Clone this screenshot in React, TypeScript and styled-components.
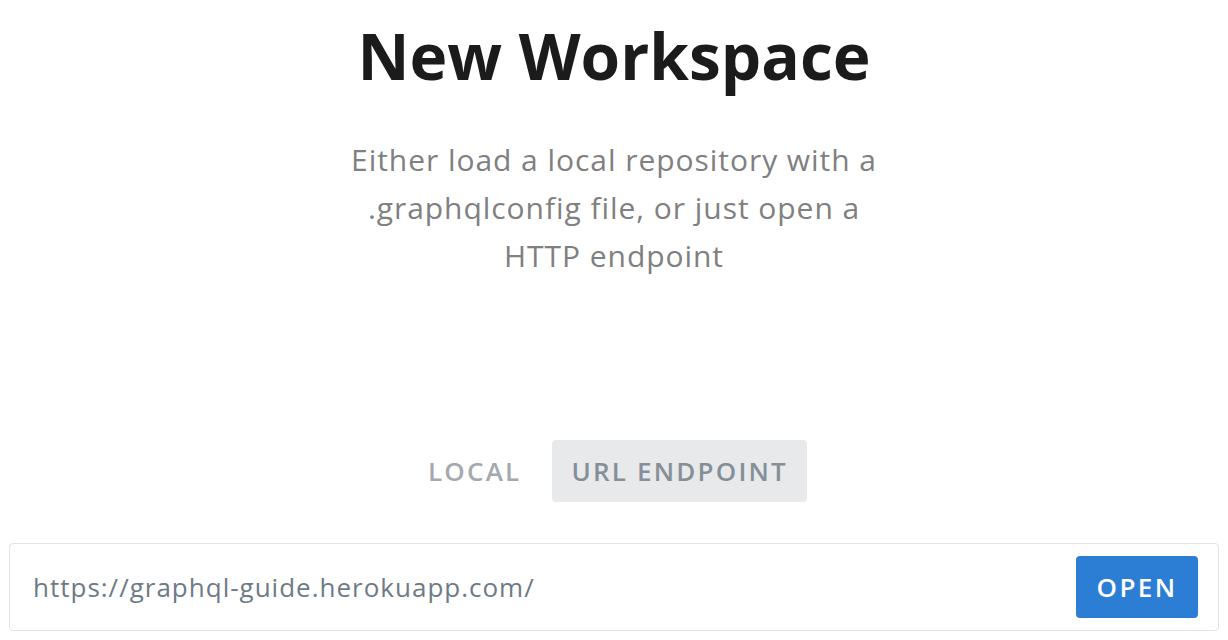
import React from "react";
import { styled, createGlobalStyle } from "styled-components";

const GlobalStyle = createGlobalStyle`
  html, body {
    margin: 0;
    padding: 0;
    background: #ffffff;
    font-family: "Open Sans", "Noto Sans", sans-serif;
  }
`;

type TabKey = "local" | "url";

const App = () => {
  const [tab, setTab] = React.useState<TabKey>("url");
  const [endpoint, setEndpoint] = React.useState("https://graphql-guide.herokuapp.com/");

  return (
    <>
      <GlobalStyle />
      <Page>
        <Title>New Workspace</Title>
        <Subtitle>
          Either load a local repository with a .graphqlconfig file, or just open a HTTP endpoint
        </Subtitle>
        <Tabs>
          <TabButton $active={tab === "local"} onClick={() => setTab("local")}>
            Local
          </TabButton>
          <TabButton $active={tab === "url"} onClick={() => setTab("url")}>
            URL Endpoint
          </TabButton>
        </Tabs>
        <EndpointBox>
          <EndpointInput value={endpoint} onChange={(e) => setEndpoint(e.target.value)} />
          <OpenButton>Open</OpenButton>
        </EndpointBox>
      </Page>
    </>
  );
};

export default App;

const Page = styled.div`
  display: flex;
  flex-direction: column;
  align-items: center;
  padding: 12px 9px 0;
  box-sizing: border-box;
  width: 100%;
`;

const Title = styled.h1`
  margin: 0;
  font-size: 64px;
  line-height: 88px;
  font-weight: 700;
  color: #1b1b1b;
  text-align: center;
`;

const Subtitle = styled.p`
  margin: 36px 0 0;
  max-width: 550px;
  font-size: 30px;
  line-height: 48px;
  letter-spacing: 0.95px;
  font-weight: 400;
  color: #808080;
  text-align: center;
`;

const Tabs = styled.div`
  display: flex;
  align-items: center;
  margin-top: 160px;
`;

const TabButton = styled.button<{ $active: boolean }>`
  height: 62px;
  margin-right: 12px;
  padding: 0 19px;
  border: none;
  border-radius: 4px;
  font-family: inherit;
  font-size: 26px;
  font-weight: 600;
  letter-spacing: 2.2px;
  text-transform: uppercase;
  cursor: pointer;
  background: ${(p) => (p.$active ? "#e8e9eb" : "transparent")};
  color: ${(p) => (p.$active ? "#858f98" : "#a4a9ad")};
`;

const EndpointBox = styled.div`
  display: flex;
  align-items: center;
  gap: 16px;
  width: 100%;
  height: 88px;
  margin-top: 41px;
  padding: 0 20px 0 23px;
  box-sizing: border-box;
  border: 1px solid #e3e3e3;
  border-radius: 4px;
`;

const EndpointInput = styled.input`
  flex: 1;
  min-width: 0;
  border: none;
  outline: none;
  padding: 0;
  background: transparent;
  font-family: inherit;
  font-size: 26px;
  letter-spacing: 1px;
  color: #6e7a86;
`;

const OpenButton = styled.button`
  height: 62px;
  width: 122px;
  border: none;
  border-radius: 4px;
  background: #2b7ed4;
  color: #ffffff;
  font-family: inherit;
  font-size: 26px;
  font-weight: 600;
  letter-spacing: 2.4px;
  text-transform: uppercase;
  cursor: pointer;
`;
